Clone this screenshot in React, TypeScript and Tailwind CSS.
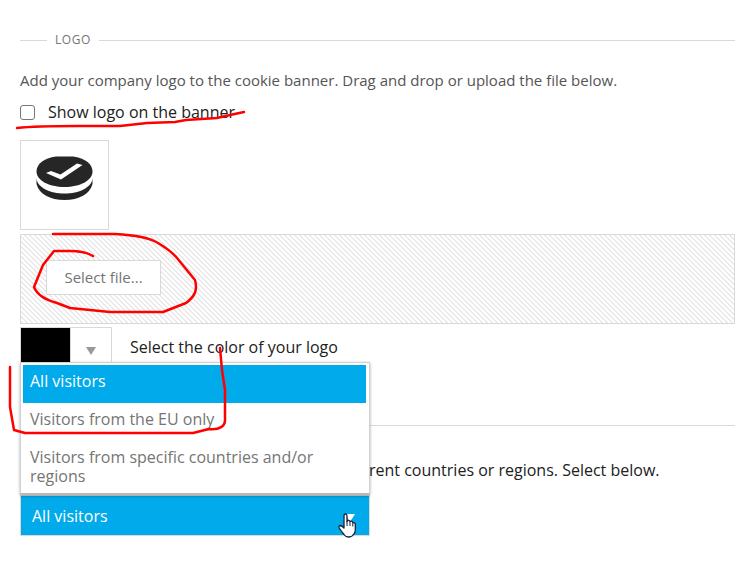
import { useState } from "react";

const options = [
  "All visitors",
  "Visitors from the EU only",
  "Visitors from specific countries and/or regions",
];

const LogoPreview = () => {
  return (
    <div className="w-[89px] h-[90px] border border-[#d9d9d9] bg-white flex justify-center pt-[15px]">
      <svg width="58" height="45" viewBox="0 0 58 45" role="img" aria-label="Company logo">
        <path
          d="M0.500 16 V28 C3 38 14 44 28.500 44 C43 44 54 38 56.500 28 V16 Z"
          fill="#262626"
        />
        <path
          d="M0 15 V22 C2 32 14 37.500 28.500 37.500 C43 37.500 55 32 57 22 V15 Z"
          fill="#fff"
        />
        <path
          d="M20 0.500 H37 C49 2 56.500 8 56.500 15.500 C56.500 24.500 44 31 28.500 31 C13 31 0.500 24.500 0.500 15.500 C0.500 8 8 2 20 0.500 Z"
          fill="#262626"
        />
        <path d="M10 17 L15 15 L24.500 18.500 L41 7.500 L46.500 9 L25 23.500 Z" fill="#fff" />
      </svg>
    </div>
  );
};

const HandCursor = () => {
  return (
    <svg
      className="absolute left-[318px] top-[18px] pointer-events-none"
      width="19"
      height="25"
      viewBox="0 0 19 25"
      aria-hidden="true"
    >
      <path
        d="M6 15 V3 Q6 1 7.500 1 Q9 1 9 3 V8.500 Q9 7.300 10.500 7.300 Q11.800 7.300 12 8.700 Q12.500 8 13.500 8.200 Q14.800 8.500 14.800 9.700 Q17.300 9.200 17.300 12 V17 Q17.300 20 15.500 21.500 Q14 24 10.500 24 Q7.500 24 6 21.500 Q3.500 18.500 1.200 15 Q0.500 12.500 2.500 12.500 Q4 12.800 6 15 Z"
        fill="#fff"
        stroke="#14233a"
        strokeWidth="1.3"
        strokeLinejoin="round"
      />
      <path d="M9 8 V13 M12 9 V13 M14.800 10 V13.500" stroke="#14233a" strokeWidth="1" />
    </svg>
  );
};

const Annotations = () => {
  return (
    <svg
      className="absolute left-0 top-0 pointer-events-none"
      width="752"
      height="577"
      fill="none"
      stroke="#ff0000"
      strokeWidth="2.5"
      strokeLinecap="round"
      strokeLinejoin="round"
      aria-hidden="true"
    >
      <path d="M17 128 C35 126 55 126 78 126 H120 L147 123 L175 122 L186 120 L217 118 L230 115 L244 112" />
      <path d="M53 234 H115 C135 235 150 238 158 243 C168 249 172 252 177 258 L195 280 C198 291 194 297 186 303 L163 312 H110 L70 308 L57 303 C42 299 36 292 34 287 L43 265 L54 251 H70 C80 251 88 253 93 256" />
      <path d="M10 367 V407 L14 430 L25 433 H193 L209 429 C220 430 225 426 225 420 V390 L222 370 L220 348" />
    </svg>
  );
};

const App = () => {
  const [visitors, setVisitors] = useState(options[0]);

  return (
    <div className="relative min-h-screen overflow-hidden bg-white font-['Open_Sans','Noto_Sans',sans-serif] text-base text-[#212121]">
      <main className="pl-5 pr-[17px] pt-[30px]">
        {/* Section Heading */}
        <div className="flex items-center gap-2 h-5">
          <span className="w-[27px] h-px bg-[#d9d9d9]" />
          <h2 className="text-xs tracking-wider text-[#757575]">LOGO</h2>
          <span className="flex-1 h-px bg-[#d9d9d9]" />
        </div>

        <p className="mt-[19px] text-[15px] leading-[22px] text-[#555]">
          Add your company logo to the cookie banner. Drag and drop or upload the file below.
        </p>

        {/* Show Logo */}
        <label className="mt-[10px] flex w-fit items-center gap-[13px] leading-[22px]">
          <input
            type="checkbox"
            className="appearance-none w-[15px] h-[15px] border border-[#767676] rounded-[3px] bg-white checked:bg-[#00aaeb]"
          />
          Show logo on the banner
        </label>

        <div className="mt-[17px]">
          <LogoPreview />
        </div>

        {/* Upload Area */}
        <div className="mt-1 h-[90px] border border-[#d9d9d9] px-[25px] py-[25px] bg-[linear-gradient(45deg,#fff_25%,#e9e9e9_25%,#e9e9e9_50%,#fff_50%,#fff_75%,#e9e9e9_75%)] bg-[length:5px_5px]">
          <button
            type="button"
            className="h-[35px] w-[115px] border border-[#d9d9d9] bg-white text-[15px] text-[#757575]"
          >
            Select file...
          </button>
        </div>

        {/* Logo Color */}
        <div className="mt-[3px] flex items-center gap-[18px] h-9">
          <button
            type="button"
            aria-label="Logo color"
            className="flex h-9 w-[92px] border border-[#d9d9d9]"
          >
            <span className="h-full w-[50px] bg-black border-r border-[#d9d9d9]" />
            <span className="flex h-full flex-1 items-center justify-center pt-3">
              <svg width="10" height="8" viewBox="0 0 10 8" aria-hidden="true">
                <path d="M0 0 H10 L5 8 Z" fill="#999" />
              </svg>
            </span>
          </button>
          <span className="pt-[3px]">Select the color of your logo</span>
        </div>

        <hr className="mt-[62px] border-[#d9d9d9]" />

        <p className="mt-[33px] pl-[349px] leading-[22px]">
          rent countries or regions. Select below.
        </p>

        {/* Visitors Dropdown */}
        <div className="relative mt-[14px] w-[350px]">
          <select
            aria-label="Visitors"
            value={visitors}
            onChange={(e) => setVisitors(e.target.value)}
            className="block appearance-none h-[41px] w-full border border-[#d9d9d9] bg-[#00aaeb] pl-[11px] text-white"
          >
            {options.map((option) => (
              <option key={option}>{option}</option>
            ))}
          </select>
          <svg
            className="absolute right-[15px] top-[19px] pointer-events-none"
            width="10"
            height="8"
            viewBox="0 0 10 8"
            aria-hidden="true"
          >
            <path d="M0 0 H10 L5 8 Z" fill="#fff" />
          </svg>

          <div
            role="listbox"
            aria-label="Visitor options"
            className="absolute bottom-[41px] left-0 w-full h-[133px] border border-[#d0d0d0] border-b-2 border-b-[#b8b8b8] bg-white p-[2px] shadow-[0_1px_3px_rgba(0,0,0,0.3)]"
          >
            {options.map((option) => (
              <button
                key={option}
                type="button"
                role="option"
                aria-selected={option === visitors}
                onClick={() => setVisitors(option)}
                className={`block w-[343px] min-h-[38px] px-[7px] pt-[7px] pb-3 text-left leading-[19px] ${
                  option === visitors ? "bg-[#00aaeb] text-white" : "text-[#757575]"
                }`}
              >
                {option}
              </button>
            ))}
          </div>
          <HandCursor />
        </div>
      </main>
      <Annotations />
    </div>
  );
};

export default App;
